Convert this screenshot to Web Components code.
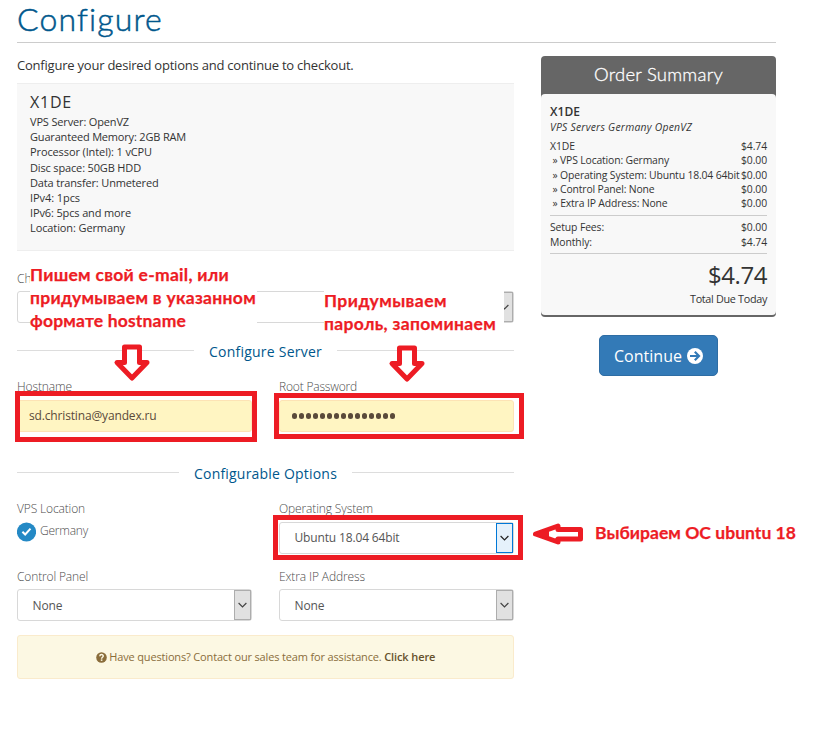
<!DOCTYPE html>
<html lang="en">
<head>
<meta charset="utf-8">
<title>Configure</title>
<style>
body{margin:0;background:#fff;color:#333;font-family:"Open Sans","Noto Sans",sans-serif;font-size:12px}
</style>
</head>
<body>
<order-page></order-page>
<script>
const define = (name, html, after) => customElements.define(name, class extends HTMLElement {
  connectedCallback() {
    if (this.shadowRoot) return;
    const t = document.createElement('template');
    t.innerHTML = typeof html === 'function' ? html(this) : html;
    this.attachShadow({mode: 'open'}).appendChild(document.importNode(t.content, true));
    if (after) after(this);
  }
});
const at = (el, n, d = '') => el.getAttribute(n) ?? d;

/* Text run whose tracking is tuned to a given width (w). */
define('fit-text', `<style>:host{display:inline-block;white-space:pre}</style><slot></slot>`, el => {
  const w = +at(el, 'w'), n = el.textContent.length;
  if (w) el.style.letterSpacing = (w - el.getBoundingClientRect().width) / n + 'px';
});

define('page-heading', `<style>
:host{display:block;height:42px;border-bottom:1px solid #ccc;font:300 32px/38px Lato,sans-serif;color:#00578c;-webkit-text-stroke:.5px #00578c}
</style><slot></slot>`);

define('spec-card', `<style>
:host{display:block;box-sizing:border-box;height:168px;background:#f8f8f8;border:solid #eee;border-width:1px 0;padding:8px 13px;font-size:11px;line-height:15.2px}
.n{font-size:16px;line-height:20px;margin-bottom:2px}
</style><div class="n"><slot name="name"></slot></div><slot></slot>`);

define('section-divider', `<style>
:host{display:flex;align-items:center;gap:15px;height:20px;color:#00578c;font-size:14px;line-height:20px}
i{flex:1;height:1px;background:#ddd;margin-bottom:1px}
::slotted(*){padding-top:2px}
</style><i></i><slot></slot><i></i>`);

define('form-field', `<style>
:host{display:block;color:#666}
.l{height:20px;line-height:20px;font-weight:300;margin-bottom:3px;color:#4c4c4c}
:host([low]) .l{line-height:22px}
</style><div class="l"><slot name="label"></slot></div><slot></slot>`);

define('drop-select', `<style>
:host{display:flex;justify-content:space-between;box-sizing:border-box;height:32px;border:1px solid #d8d8d8;border-radius:3px;background:#fff;color:#555;line-height:32px;padding-left:14.5px}
:host([active]){line-height:30px}
.b{box-sizing:border-box;width:17px;height:30px;border:1px solid #adadad;background:#e1e1e1;display:flex;align-items:center;justify-content:center;color:#444}
:host([active]) .b{border-color:#0078d7;background:#e5f1fb;color:#222}
</style><span><slot></slot></span><span class="b"><svg width="9" height="6" viewBox="0 0 9 6"><path d="M.6 1l3.900 3.900L8.400 1" fill="none" stroke="currentColor" stroke-width="1.2"/></svg></span>`);

define('text-input', `<style>
:host{display:flex;align-items:center;box-sizing:border-box;height:32px;border:1px solid #fde3b5;border-radius:3px;background:#fff5c2;color:#5a4a3a;padding:0 0 1px 11px}
</style><slot></slot>`);

define('password-dots', el => `<style>:host{display:flex;gap:1.7px;padding:1px 0 0 1px}i{width:5.3px;height:5.3px;border-radius:50%;background:#5a4a3a}</style>${'<i></i>'.repeat(+at(el, 'count'))}`);

define('radio-choice', `<style>
:host{display:flex;gap:4px;height:32px;font-weight:300;color:#4c4c4c;line-height:18px}
svg{flex:none}
</style><svg width="19" height="20" viewBox="0 0 19 20"><circle cx="9.5" cy="10" r="9.6" fill="#2489c5"/><path d="M5.400 9.700l2.800 2.800 5.300-5.800" fill="none" stroke="#fff" stroke-width="2"/></svg><slot></slot>`);

define('help-note', `<style>
:host{display:flex;align-items:center;justify-content:center;box-sizing:border-box;height:44px;border:1px solid #faebcc;border-radius:3px;background:#fcf8e3;color:#8a6d3b;font-size:11px;line-height:20px}
svg{margin-right:2.500px}
</style><svg width="11" height="11" viewBox="0 0 11 11"><circle cx="5.5" cy="5.5" r="5.3" fill="#8a6d3b"/><path d="M3.8 4.3C3.9 2 7.4 2.1 7.2 4.2 7.1 5.3 5.6 5.3 5.6 6.7" fill="none" stroke="#fcf8e3" stroke-width="1.5"/><rect x="4.8" y="7.4" width="1.6" height="1.5" fill="#fcf8e3"/></svg><slot></slot>`);

define('summary-row', `<style>:host{display:flex;justify-content:space-between}</style><slot></slot>`);

define('order-summary', `<style>
:host{display:block;box-sizing:border-box;height:261px;background:#666;border-radius:4px;padding-bottom:2px;font-size:10.4px}
.h{height:38px;font:300 18.500px/37px Lato,sans-serif;color:#fff;text-align:center;-webkit-text-stroke:.3px #fff}
.b{box-sizing:border-box;height:221px;background:#f8f8f8;border-radius:4px;padding:10px 9px 0}
.n{font-size:12px;font-weight:600;line-height:15px}
.g{font-style:italic;line-height:16px;margin-bottom:4px}
.r{line-height:14.3px;height:72px;padding-bottom:4px}
.s{border:solid #ccc;border-width:1px 0;padding:4px 0 3px;line-height:15px}
.t{font-size:24px;line-height:30px;text-align:right;margin-top:6px}
.d{font-size:10.8px;line-height:18px;text-align:right}
</style><div class="h"><fit-text w="129">Order Summary</fit-text></div>
<div class="b"><div class="n"><fit-text w="30">X1DE</fit-text></div>
<div class="g"><fit-text w="142">VPS Servers Germany OpenVZ</fit-text></div>
<div class="r">
<summary-row><fit-text w="25">X1DE</fit-text><fit-text w="26">$4.74</fit-text></summary-row>
<summary-row><fit-text w="119"> » VPS Location: Germany</fit-text><fit-text w="26">$0.00</fit-text></summary-row>
<summary-row><fit-text w="189.5"> » Operating System: Ubuntu 18.04 64bit</fit-text><fit-text w="26">$0.00</fit-text></summary-row>
<summary-row><fit-text w="104.5"> » Control Panel: None</fit-text><fit-text w="26">$0.00</fit-text></summary-row>
<summary-row><fit-text w="117.5"> » Extra IP Address: None</fit-text><fit-text w="26">$0.00</fit-text></summary-row>
</div>
<div class="s"><summary-row><fit-text w="54">Setup Fees:</fit-text><fit-text w="26">$0.00</fit-text></summary-row>
<summary-row><fit-text w="42">Monthly:</fit-text><fit-text w="26">$4.74</fit-text></summary-row></div>
<div class="t"><fit-text w="59">$4.74</fit-text></div>
<div class="d"><fit-text w="77">Total Due Today</fit-text></div></div>`);

define('continue-button', `<style>
:host{display:flex;align-items:center;justify-content:center;gap:5px;box-sizing:border-box;width:119px;height:41px;margin:18px auto 0;border:1px solid #2e6da4;border-radius:5px;background:#337ab7;color:#fff;font-size:16px;line-height:39px}
fit-text{padding-top:1px}
</style><fit-text w="68">Continue</fit-text><svg width="16" height="16" viewBox="0 0 16 16"><circle cx="8" cy="8" r="8" fill="#fff"/><path d="M3 8h8.5M7.8 3.7L12 8l-4.2 4.3" fill="none" stroke="#337ab7" stroke-width="2.2"/></svg>`);

/* Red annotations laid over the page. */
const place = el => `position:absolute;left:${at(el,'x')}px;top:${at(el,'y')}px;`;
define('mark-box', el => `<style>:host{${place(el)}box-sizing:border-box;width:${at(el,'w')}px;height:${at(el,'h')}px;border:5px solid #ed1c24}</style>`);
define('mark-note', el => `<style>:host{${place(el)}box-sizing:border-box;width:${at(el,'w')}px;height:${at(el,'h')}px;background:#fff;color:#ed1c24;font:700 17.500px/23px Lato,"Open Sans",sans-serif;-webkit-text-stroke:.25px #ed1c24}</style><slot></slot>`);
define('mark-arrow', el => at(el, 'dir') === 'left'
  ? `<style>:host{${place(el)}}svg{display:block}</style><svg width="52" height="24" viewBox="0 0 52 24"><path d="M48.500 7.500v9.500H26v3L3.500 12 26 4v3.500z" fill="#fff" stroke="#ed1c24" stroke-width="5" stroke-linejoin="round"/><path d="M3 12l14-5v10z" fill="#ed1c24"/></svg>`
  : `<style>:host{${place(el)}}svg{display:block}</style><svg width="38" height="38" viewBox="0 0 38 38"><path d="M11.500 3h15v15.500h7.500L19 34 4 18.500h7.500z" fill="#fff" stroke="#ed1c24" stroke-width="5" stroke-linejoin="round"/></svg>`);

define('order-page', `<style>
:host{display:block;position:relative;box-sizing:border-box;width:825px;height:754px;padding:0 49px 0 17px;overflow:hidden}
.cols{display:grid;grid-template-columns:497px 235px;gap:27px}
.intro{height:36px;padding-top:4px;line-height:36px;font-size:13px;box-sizing:content-box}
.pair{display:grid;grid-template-columns:235px 235px;gap:27px}
aside{padding-top:13px}
.first{margin-top:17px}
.d1{margin:18px 0 16px}.d2{margin:31px 0 16px}
.p3{margin-top:12px}
help-note{margin-top:14px}
b{font-weight:600;color:#66512c}
</style>
<page-heading><fit-text w="145">Configure</fit-text></page-heading>
<div class="cols"><div>
<div class="intro"><fit-text w="336.5">Configure your desired options and continue to checkout.</fit-text></div>
<spec-card><fit-text slot="name" w="42">X1DE</fit-text>
<div><fit-text w="99">VPS Server: OpenVZ</fit-text></div>
<div><fit-text w="156">Guaranteed Memory: 2GB RAM</fit-text></div>
<div><fit-text w="122">Processor (Intel): 1 vCPU</fit-text></div>
<div><fit-text w="111">Disc space: 50GB HDD</fit-text></div>
<div><fit-text w="128.5">Data transfer: Unmetered</fit-text></div>
<div><fit-text w="50">IPv4: 1pcs</fit-text></div>
<div><fit-text w="101">IPv6: 5pcs and more</fit-text></div>
<div><fit-text w="95">Location: Germany</fit-text></div>
</spec-card>
<form-field low class="first"><span slot="label">Ch</span><drop-select></drop-select></form-field>
<section-divider class="d1"><fit-text w="113">Configure Server</fit-text></section-divider>
<div class="pair">
<form-field><fit-text slot="label" w="55">Hostname</fit-text><text-input><fit-text w="127.5">sd.christina@yandex.ru</fit-text></text-input></form-field>
<form-field><fit-text slot="label" w="78">Root Password</fit-text><text-input><password-dots count="15"></password-dots></text-input></form-field>
</div>
<section-divider class="d2"><fit-text w="143">Configurable Options</fit-text></section-divider>
<div class="pair">
<form-field><fit-text slot="label" w="68">VPS Location</fit-text><radio-choice><fit-text w="48">Germany</fit-text></radio-choice></form-field>
<form-field><fit-text slot="label" w="94">Operating System</fit-text><drop-select active><fit-text w="105">Ubuntu 18.04 64bit</fit-text></drop-select></form-field>
</div>
<div class="pair p3">
<form-field low><fit-text slot="label" w="71">Control Panel</fit-text><drop-select><fit-text w="30">None</fit-text></drop-select></form-field>
<form-field low><fit-text slot="label" w="86">Extra IP Address</fit-text><drop-select><fit-text w="30">None</fit-text></drop-select></form-field>
</div>
<help-note><fit-text w="275">Have questions? Contact our sales team for assistance. </fit-text><b><fit-text w="51">Click here</fit-text></b></help-note>
</div>
<aside><order-summary></order-summary><continue-button></continue-button></aside>
</div>
<mark-note x="30" y="263" w="227" h="70"><div><fit-text w="199">Пишем свой e-mail, или</fit-text></div><div><fit-text w="226">придумываем в указанном</fit-text></div><div><fit-text w="156">формате hostname</fit-text></div></mark-note>
<mark-note x="324" y="289" w="180" h="47"><div><fit-text w="123">Придумываем</fit-text></div><div><fit-text w="172">пароль, запоминаем</fit-text></div></mark-note>
<mark-note x="595" y="521" w="210" h="24"><fit-text w="201">Выбираем ОС ubuntu 18</fit-text></mark-note>
<mark-box x="15" y="391" w="242" h="51"></mark-box>
<mark-box x="274" y="393" w="250" h="46"></mark-box>
<mark-box x="273" y="515" w="250" h="45"></mark-box>
<mark-arrow x="113" y="344"></mark-arrow>
<mark-arrow x="388" y="345"></mark-arrow>
<mark-arrow dir="left" x="532" y="522"></mark-arrow>`);
</script>
</body>
</html>
